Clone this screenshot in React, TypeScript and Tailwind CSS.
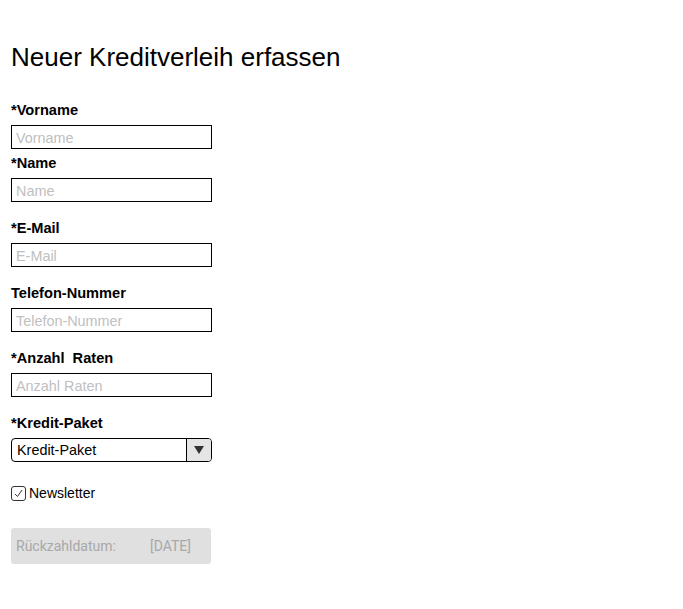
import { useState } from 'react'

// ─── FIELD ───────────────────────────────────────────────────────────────────

function Field({ label, placeholder, className = '' }: { label: string; placeholder: string; className?: string }) {
  return (
    <div className={className}>
      <label className="block text-[14.6px] leading-[16px] font-bold text-black whitespace-pre">{label}</label>
      <input
        placeholder={placeholder}
        className="mt-[7px] block w-[201px] h-[24px] border border-black px-[4px] pt-[2px] text-[14.4px] text-black placeholder:text-[#c0c0c0] outline-none"
      />
    </div>
  )
}

// ─── PAGE ─────────────────────────────────────────────────────────────────────

export default function App() {
  const [newsletter, setNewsletter] = useState(true)

  return (
    <div className="min-h-[609px] bg-white px-[11px] pt-[42px] font-['Liberation_Sans',Arial,sans-serif] text-black">
      <h1 className="text-[26px] leading-[30px] font-normal">Neuer Kreditverleih erfassen</h1>

      <Field label="*Vorname" placeholder="Vorname" className="mt-[30px]" />
      <Field label="*Name" placeholder="Name" className="mt-[6px]" />
      <Field label="*E-Mail" placeholder="E-Mail" className="mt-[18px]" />
      <Field label="Telefon-Nummer" placeholder="Telefon-Nummer" className="mt-[18px]" />
      <Field label="*Anzahl  Raten" placeholder="Anzahl Raten" className="mt-[18px]" />

      {/* KREDIT-PAKET */}
      <div className="mt-[18px]">
        <label className="block text-[14.6px] leading-[16px] font-bold">*Kredit-Paket</label>
        <div className="mt-[7px] flex w-[201px] h-[24px] border border-black rounded-[4px] overflow-hidden">
          <div className="flex-1 flex items-center px-[5px] pt-[2px] text-[14.4px]">Kredit-Paket</div>
          <div className="w-[25px] border-l border-black bg-[#e5e5e5] flex items-center justify-center">
            <svg width="10" height="8" viewBox="0 0 10 8">
              <path d="M0 0 L10 0 L5 8 Z" fill="#333" />
            </svg>
          </div>
        </div>
      </div>

      {/* NEWSLETTER */}
      <label className="mt-[21px] flex items-center gap-[3px] text-[14px] cursor-pointer" onClick={() => setNewsletter(!newsletter)}>
        <span className="w-[15px] h-[15px] border border-[#333] rounded-[3px] flex items-center justify-center">
          {newsletter && (
            <svg width="11" height="11" viewBox="0 0 11 11">
              <path d="M2 6 L4.5 8.5 L9 2" fill="none" stroke="#333" strokeWidth="1" />
            </svg>
          )}
        </span>
        <span>Newsletter</span>
      </label>

      {/* RÜCKZAHLDATUM */}
      <div className="mt-[24px] w-[200px] h-[36px] rounded-[3px] bg-[#e0e0e0] flex items-center px-[5px] text-[14px] text-[#a8a8a8] font-['Roboto',sans-serif]">
        <span className="w-[134px]">Rückzahldatum:</span>
        <span>[DATE]</span>
      </div>
    </div>
  )
}
